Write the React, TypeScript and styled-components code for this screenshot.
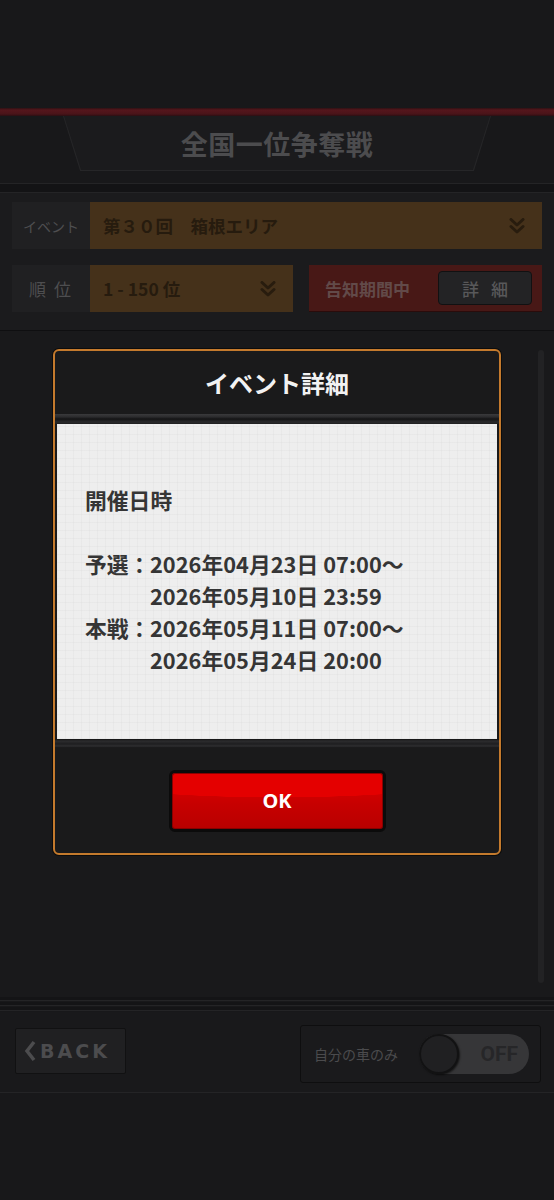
import styled, { createGlobalStyle } from 'styled-components';

const GlobalStyle = createGlobalStyle`
  html, body {
    margin: 0;
    padding: 0;
    background: #18181a;
  }
  body {
    font-family: "Noto Sans CJK JP", "Noto Sans", sans-serif;
  }
`;

const ChevronDouble = ({ color }: { color: string }) => (
  <svg width='16' height='16' viewBox='0 0 16 16' fill='none'>
    <polyline points='2,1.5 8,7 14,1.5' stroke={color} strokeWidth='3' strokeLinecap='round' strokeLinejoin='round' />
    <polyline points='2,8.5 8,14 14,8.5' stroke={color} strokeWidth='3' strokeLinecap='round' strokeLinejoin='round' />
  </svg>
);

const App = () => {
  return (
    <>
      <GlobalStyle />
      <Page>
        <TopSpace />
        <RedRule />
        <Header>
          <TitlePlate>
            <TitleInner>
              <Title>全国一位争奪戦</Title>
            </TitleInner>
          </TitlePlate>
        </Header>
        <RuleStack />
        <FilterPanel>
          <FilterRow>
            <FieldLabel small>イベント</FieldLabel>
            <Select grow>
              <span>第３０回　箱根エリア</span>
              <ChevronDouble color='#281c0e' />
            </Select>
          </FilterRow>
          <FilterRow>
            <FieldLabel>順 位</FieldLabel>
            <Select width={203}>
              <span>1 - 150 位</span>
              <ChevronDouble color='#281c0e' />
            </Select>
            <NoticeBox>
              <NoticeText>告知期間中</NoticeText>
              <DetailButton>詳 細</DetailButton>
            </NoticeBox>
          </FilterRow>
        </FilterPanel>
        <Main>
          <Modal>
            <ModalTitle>イベント詳細</ModalTitle>
            <ModalRule />
            <ModalBody>
              <BodyText>
                <Line>開催日時</Line>
                <Line>&nbsp;</Line>
                <Line>
                  <Term>予選：</Term>2026年04月23日 07:00〜
                </Line>
                <Line>
                  <Term />2026年05月10日 23:59
                </Line>
                <Line>
                  <Term>本戦：</Term>2026年05月11日 07:00〜
                </Line>
                <Line>
                  <Term />2026年05月24日 20:00
                </Line>
              </BodyText>
            </ModalBody>
            <ModalRule bottom />
            <ModalFooter>
              <OkButton>OK</OkButton>
            </ModalFooter>
          </Modal>
          <ScrollTrack />
        </Main>
        <BottomRules />
        <BottomBar>
          <BackButton>
            <svg width='12' height='22' viewBox='0 0 12 22' fill='none'>
              <polyline points='10,2 3,11 10,20' stroke='#4c4c4e' strokeWidth='3.5' strokeLinejoin='miter' />
            </svg>
            <BackText>BACK</BackText>
          </BackButton>
          <TogglePanel>
            <ToggleLabel>自分の車のみ</ToggleLabel>
            <Switch>
              <Knob />
              <SwitchText>OFF</SwitchText>
            </Switch>
          </TogglePanel>
        </BottomBar>
        <BottomSpace />
      </Page>
    </>
  );
};

export default App;

const Page = styled.div`
  width: 554px;
  height: 1200px;
  display: flex;
  flex-direction: column;
  background: #18181a;
  overflow: hidden;
`;

const TopSpace = styled.div`
  height: 108px;
  flex: none;
`;

const RedRule = styled.div`
  height: 8px;
  flex: none;
  background: linear-gradient(#2e1114 0, #55161c 2px, #4a1419 6px, #2a0f12 8px);
`;

const Header = styled.div`
  height: 67px;
  flex: none;
  background: #18181a;
`;

const TitlePlate = styled.div`
  width: 428px;
  height: 55px;
  margin: 0 auto;
  padding: 0 1px 1px;
  box-sizing: border-box;
  background: #262628;
  clip-path: polygon(0 0, 100% 0, 96% 100%, 4% 100%);
`;

const TitleInner = styled.div`
  height: 100%;
  display: flex;
  align-items: center;
  justify-content: center;
  background: #1b1b1d;
  clip-path: polygon(0 0, 100% 0, 96% 100%, 4% 100%);
`;

const Title = styled.h1`
  margin: 0;
  font-size: 27px;
  font-weight: 700;
  color: #4c4c4e;
  letter-spacing: 0.5px;
`;

const RuleStack = styled.div`
  height: 8px;
  flex: none;
  border-top: 1px solid #242426;
  border-bottom: 1px solid #242426;
  background: #131315;
`;

const FilterPanel = styled.div`
  height: 138px;
  flex: none;
  box-sizing: border-box;
  padding: 9px 12px 0;
  display: flex;
  flex-direction: column;
  gap: 16px;
  background: #1b1b1d;
  border-bottom: 1px solid #0f0f11;
`;

const FilterRow = styled.div`
  display: flex;
  height: 47px;
`;

const FieldLabel = styled.div<{ small?: boolean }>`
  width: 78px;
  flex: none;
  display: flex;
  align-items: center;
  justify-content: center;
  background: #202022;
  color: #4e4e50;
  font-size: ${(p) => (p.small ? '14px' : '17px')};
  letter-spacing: ${(p) => (p.small ? '0' : '2px')};
`;

const Select = styled.div<{ grow?: boolean; width?: number }>`
  ${(p) => (p.grow ? 'flex: 1;' : `width: ${p.width}px; flex: none;`)}
  display: flex;
  align-items: center;
  justify-content: space-between;
  padding: 0 17px 0 13px;
  box-sizing: border-box;
  background: #45311a;
  color: #261b0e;
  font-size: 17.5px;
  font-weight: 700;
`;

const NoticeBox = styled.div`
  flex: 1;
  margin-left: 16px;
  display: flex;
  align-items: center;
  justify-content: space-between;
  padding: 0 10px 0 16px;
  background: #481816;
  border-bottom: 1px solid #2a0c0b;
`;

const NoticeText = styled.span`
  font-size: 17px;
  font-weight: 700;
  color: #624a49;
`;

const DetailButton = styled.div`
  width: 94px;
  height: 34px;
  display: flex;
  align-items: center;
  justify-content: center;
  box-sizing: border-box;
  background: #232325;
  border: 1px solid #111112;
  border-radius: 4px;
  color: #58585a;
  font-size: 17px;
  font-weight: 500;
  letter-spacing: 4px;
  text-indent: 4px;
`;

const Main = styled.div`
  flex: 1;
  position: relative;
  display: flex;
  justify-content: center;
  align-items: flex-start;
  padding-top: 18px;
  background: #19191b;
`;

const ScrollTrack = styled.div`
  position: absolute;
  right: 10px;
  top: 19px;
  width: 6px;
  height: 633px;
  border-radius: 3px;
  background: #222224;
`;

const Modal = styled.div`
  width: 448px;
  box-sizing: border-box;
  border: 2px solid #c47a2d;
  border-radius: 6px;
  background: #1a1a1b;
  box-shadow: 0 0 0 1px #0c0c0c;
  overflow: hidden;
  display: flex;
  flex-direction: column;
`;

const ModalTitle = styled.div`
  height: 63px;
  display: flex;
  align-items: center;
  justify-content: center;
  color: #f2f2f2;
  font-size: 24px;
  font-weight: 700;
`;

const ModalRule = styled.div<{ bottom?: boolean }>`
  height: ${(p) => (p.bottom ? '9px' : '10px')};
  background: ${(p) =>
    p.bottom
      ? 'linear-gradient(#101010 0, #2c2c2e 2px, #1e1e20 5px, #2e2e30 7px, #151516 9px)'
      : 'linear-gradient(#3a3a3c 0, #2b2b2d 3px, #141415 5px, #2a2a2c 8px, #1e1e1f 10px)'};
`;

const ModalBody = styled.div`
  height: 315px;
  margin: 0 2px;
  display: flex;
  align-items: center;
  padding-left: 28px;
  background-color: #eeeeee;
  background-image: repeating-linear-gradient(0deg, rgba(0, 0, 0, 0.025) 0 1px, transparent 1px 8px),
    repeating-linear-gradient(90deg, rgba(0, 0, 0, 0.025) 0 1px, transparent 1px 8px);
`;

const BodyText = styled.div`
  color: #353535;
  font-size: 21.8px;
  font-weight: 700;
  line-height: 32px;
  margin-top: -4px;
`;

const Line = styled.div`
  display: flex;
  white-space: pre;
`;

const Term = styled.span`
  width: 65px;
  flex: none;
`;

const ModalFooter = styled.div`
  height: 105px;
  display: flex;
  align-items: center;
  justify-content: center;
`;

const OkButton = styled.div`
  width: 217px;
  height: 62px;
  box-sizing: border-box;
  border: 3px solid #0b0b0b;
  border-radius: 6px;
  display: flex;
  align-items: center;
  justify-content: center;
  color: #ffffff;
  font-family: "Noto Sans", "Open Sans", sans-serif;
  font-size: 20px;
  font-weight: 700;
  background: radial-gradient(ellipse 140% 60% at 50% 0%, #e40000 0 72%, transparent 73%),
    linear-gradient(#e30000, #c70000 55%, #b80000);
  box-shadow: inset 0 0 0 1px #8a0000;
`;

const BottomRules = styled.div`
  height: 15px;
  flex: none;
  background: repeating-linear-gradient(#141416 0 3px, #242426 3px 4px, #18181a 4px 5px);
`;

const BottomBar = styled.div`
  height: 81px;
  flex: none;
  box-sizing: border-box;
  display: flex;
  align-items: center;
  justify-content: space-between;
  padding: 0 13px 0 15px;
  background: #19191b;
  border-bottom: 1px solid #242426;
`;

const BackButton = styled.div`
  width: 111px;
  height: 46px;
  margin-top: -3px;
  box-sizing: border-box;
  display: flex;
  align-items: center;
  gap: 4px;
  padding-left: 8px;
  background: #202022;
  border: 1px solid #111112;
  border-radius: 2px;
`;

const BackText = styled.span`
  font-family: "DejaVu Sans", sans-serif;
  font-weight: 700;
  font-size: 19px;
  letter-spacing: 3px;
  color: #4c4c4e;
`;

const TogglePanel = styled.div`
  width: 241px;
  height: 58px;
  margin-top: 3px;
  box-sizing: border-box;
  display: flex;
  align-items: center;
  justify-content: space-between;
  padding: 0 11px 0 13px;
  background: #1a1a1c;
  border: 1px solid #0e0e0f;
  border-radius: 3px;
`;

const ToggleLabel = styled.span`
  font-size: 14px;
  color: #4b4b4d;
`;

const Switch = styled.div`
  width: 110px;
  height: 40px;
  border-radius: 20px;
  background: #363638;
  position: relative;
  display: flex;
  align-items: center;
  justify-content: flex-end;
  padding-right: 11px;
  box-sizing: border-box;
`;

const Knob = styled.div`
  position: absolute;
  left: 0;
  top: 0;
  width: 40px;
  height: 40px;
  box-sizing: border-box;
  border-radius: 50%;
  background: #202022;
  border: 2px solid #121213;
  box-shadow: 1px 1px 2px rgba(0, 0, 0, 0.6);
`;

const SwitchText = styled.span`
  font-family: Roboto, sans-serif;
  font-weight: 700;
  font-size: 21px;
  color: #262628;
`;

const BottomSpace = styled.div`
  height: 107px;
  flex: none;
  background: #18181a;
`;
